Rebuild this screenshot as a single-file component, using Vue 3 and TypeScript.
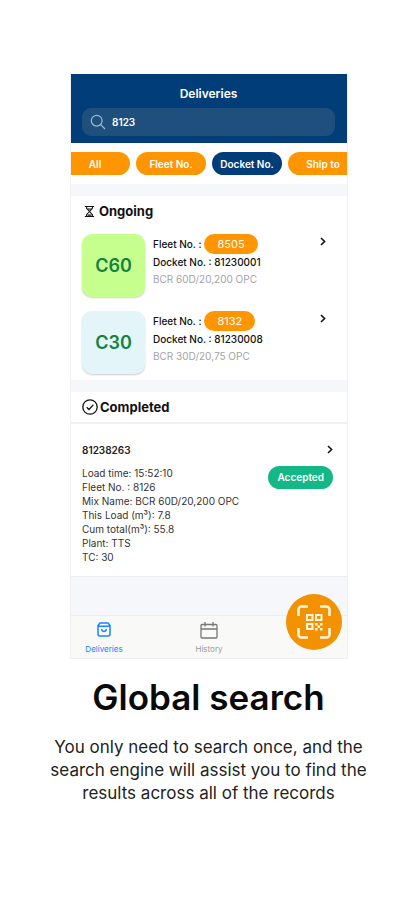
<script setup lang="ts">
import { ref } from 'vue'

interface Ongoing {
  grade: string
  tone: string
  fleet: string
  docket: string
  mix: string
}

const query = ref('8123')
const filters = ['All', 'Fleet No.', 'Docket No.', 'Ship to']
const activeFilter = ref('Docket No.')

const ongoing: Ongoing[] = [
  { grade: 'C60', tone: 'lime', fleet: '8505', docket: '81230001', mix: 'BCR 60D/20,200 OPC' },
  { grade: 'C30', tone: 'ice', fleet: '8132', docket: '81230008', mix: 'BCR 30D/20,75 OPC' },
]

const completedLines = [
  'Load time: 15:52:10',
  'Fleet No. : 8126',
  'Mix Name: BCR 60D/20,200 OPC',
  'This Load (m³): 7.8',
  'Cum total(m³): 55.8',
  'Plant: TTS',
  'TC: 30',
]
</script>

<template>
  <main class="page">
    <section class="phone">
      <header class="top">
        <h2 class="top-title">Deliveries</h2>
        <label class="search">
          <svg class="search-icon" viewBox="0 0 16 16" aria-hidden="true">
            <circle cx="6.7" cy="6.7" r="5.4" />
            <path d="M10.7 10.7 15 15" />
          </svg>
          <input v-model="query" class="search-input" type="text" aria-label="Search deliveries" />
        </label>
      </header>

      <nav class="filters">
        <button
          v-for="f in filters"
          :key="f"
          type="button"
          class="filter"
          :class="{ active: f === activeFilter }"
          @click="activeFilter = f"
        >{{ f }}</button>
      </nav>

      <section class="ongoing">
        <h3 class="heading">
          <svg class="hourglass" viewBox="0 0 12 14" aria-hidden="true">
            <path d="M1 1.5h10M1 12.5h10M2.8 1.5v2L6 7l3.2-3.5v-2M2.8 12.5v-2L6 7l3.2 3.5v2M4 4.2h4M4 11h4" />
          </svg>
          Ongoing
        </h3>
        <article v-for="o in ongoing" :key="o.docket" class="row">
          <div class="grade" :class="o.tone">{{ o.grade }}</div>
          <div class="info">
            <p class="line fleet">Fleet No. : <span class="badge">{{ o.fleet }}</span></p>
            <p class="line">Docket No. : <span class="docket">{{ o.docket }}</span></p>
            <p class="line mix">{{ o.mix }}</p>
          </div>
          <svg class="chevron" viewBox="0 0 6 9" aria-hidden="true"><path d="M1 1l3.6 3.5L1 8" /></svg>
        </article>
      </section>

      <section class="completed">
        <h3 class="heading done">
          <svg class="check" viewBox="0 0 16 16" aria-hidden="true">
            <circle cx="8" cy="8" r="7.2" />
            <path d="M4.7 8.2 7 10.5l4.4-4.6" />
          </svg>
          Completed
        </h3>
        <article class="record">
          <div class="record-top">
            <h4 class="number">81238263</h4>
            <svg class="chevron" viewBox="0 0 6 9" aria-hidden="true"><path d="M1 1l3.6 3.5L1 8" /></svg>
          </div>
          <div class="record-body">
            <ul class="details">
              <li v-for="l in completedLines" :key="l">{{ l }}</li>
            </ul>
            <span class="status">Accepted</span>
          </div>
        </article>
      </section>

      <footer class="tabs">
        <a class="tab current" href="#deliveries">
          <svg class="tab-icon bag" viewBox="0 0 14 15" aria-hidden="true">
            <path d="M3 1h8l2 2.5V12a2 2 0 0 1-2 2H3a2 2 0 0 1-2-2V3.5zM1 4.3h12M4.5 7c.3 3.2 4.700 3.2 5 0" />
          </svg>
          Deliveries
        </a>
        <a class="tab" href="#history">
          <svg class="tab-icon calendar" viewBox="0 0 18 17" aria-hidden="true">
            <rect x="1" y="2.5" width="16" height="13.5" rx="1" />
            <path d="M1 7h16M5 0v4.5M13 0v4.5" />
          </svg>
          History
        </a>
        <button class="scan" type="button" aria-label="Scan QR code">
          <svg class="scan-icon" viewBox="0 0 34 34" aria-hidden="true">
            <path class="frame" d="M1.5 11V4.5a3 3 0 0 1 3-3H11M23 1.5h6.5a3 3 0 0 1 3 3V11M32.5 23v6.5a3 3 0 0 1-3 3H23M11 32.5H4.5a3 3 0 0 1-3-3V23" />
            <path class="cells" d="M10 10h5.5v5H10zM19 10h5.500v5H19zM10 19h5.5v5H10z" />
            <path class="dots" d="M18 18h2.500v2.500H18zM23 18h2.500v2.500H23zM20.500 20.500H23V23h-2.500zM18 23h2.500v2.500H18zM23 23h2.500v2.500H23z" />
          </svg>
        </button>
      </footer>
    </section>

    <h1 class="title">Global search</h1>
    <p class="copy">You only need to search once, and the search engine will assist you to find the results across all of the records</p>
  </main>
</template>

<style>
body {
  margin: 0;
  background: #fff;
}
</style>

<style scoped>
.page {
  padding: 74px 0 96px;
  font-family: Inter, "Liberation Sans", sans-serif;
  color: #111;
}
h1, h2, h3, h4, p, ul {
  margin: 0;
  padding: 0;
}
svg {
  display: block;
  flex: none;
  fill: none;
  stroke: currentColor;
}
button {
  border: 0;
  padding: 0;
  font-family: inherit;
  cursor: pointer;
}
.phone {
  margin: 0 69px 0 70px;
  border: 1px solid #f0f0f3;
  border-top: 0;
  background: #f6f7fa;
}
.top {
  background: #003d79;
  padding: 12px 12px 7px 11px;
}
.top-title {
  font-size: 12px;
  line-height: 16px;
  font-weight: 600;
  text-align: center;
  color: #fff;
}
.search {
  display: flex;
  align-items: center;
  gap: 6px;
  height: 28px;
  margin-top: 6px;
  padding: 0 8px;
  border-radius: 9px;
  background: #1f4f7d;
}
.search-icon {
  width: 16px;
  height: 16px;
  color: #9fbbd3;
  stroke-width: 1.2;
}
.search-input {
  flex: 1;
  min-width: 0;
  border: 0;
  padding: 0;
  outline: 0;
  background: transparent;
  color: #fff;
  font: 600 10px Inter, "Liberation Sans", sans-serif;
}
.filters {
  display: flex;
  justify-content: center;
  gap: 6px;
  padding: 9px 0;
  overflow: hidden;
  background: #fff;
}
.filter {
  flex: none;
  width: 70px;
  height: 23px;
  border-radius: 12px;
  background: #ff9500;
  color: #fff;
  font-size: 10px;
  font-weight: 600;
}
.filter.active {
  background: #003d79;
}
.ongoing {
  display: flex;
  flex-direction: column;
  gap: 14px;
  margin-top: 12px;
  padding: 6px 12px 6px 11px;
  background: #fff;
}
.heading {
  display: flex;
  align-items: center;
  gap: 4px;
  height: 18px;
  font-size: 13px;
  font-weight: 700;
  color: #111;
}
.hourglass {
  width: 11px;
  height: 13px;
  margin-left: 2px;
  stroke-width: 1.2;
}
.row {
  display: flex;
  gap: 8px;
  padding-right: 9px;
}
.grade {
  display: flex;
  align-items: center;
  justify-content: center;
  flex: none;
  width: 63px;
  height: 63px;
  border-radius: 10px;
  box-shadow: 0 1px 2px rgba(0, 0, 0, 0.2);
  color: #118241;
  font-size: 18px;
  font-weight: 600;
}
.lime {
  background: #c6ff8e;
}
.ice {
  background: #e3f5f8;
}
.info {
  flex: 1;
  min-width: 0;
}
.line {
  height: 17px;
  font-size: 10px;
  line-height: 17px;
  font-weight: 500;
  white-space: nowrap;
}
.fleet {
  display: flex;
  align-items: center;
  gap: 3px;
  height: 20px;
}
.badge {
  padding: 0 13px;
  border-radius: 10px;
  background: #ff9500;
  color: #fff;
  font-size: 11px;
  line-height: 20px;
  font-weight: 400;
}
.mix {
  color: #a3a3a8;
  font-weight: 400;
  line-height: 16px;
}
.chevron {
  width: 6px;
  height: 9px;
  margin-top: 3px;
  stroke-width: 1.6;
}
.completed {
  margin-top: 12px;
  background: #fff;
}
.done {
  gap: 2px;
  height: 30px;
  padding: 0 11px;
  border-bottom: 2px solid #f1f1f4;
}
.check {
  width: 16px;
  height: 16px;
  stroke-width: 1.3;
}
.record {
  padding: 18px 14px 12px 11px;
  border-bottom: 1px solid #ececef;
}
.record-top {
  display: flex;
  justify-content: space-between;
  height: 16px;
}
.number {
  font-size: 10px;
  line-height: 16px;
  font-weight: 600;
  color: #222;
}
.record-body {
  display: flex;
  justify-content: space-between;
  align-items: flex-start;
  padding-top: 8px;
}
.details {
  list-style: none;
  font-size: 10px;
  line-height: 14px;
  white-space: nowrap;
  color: #333;
}
.status {
  padding: 0 9px;
  border-radius: 12px;
  background: #14b886;
  color: #fff;
  font-size: 10px;
  line-height: 23px;
  font-weight: 600;
}
.tabs {
  position: relative;
  display: grid;
  grid-template-columns: 66px 1fr 66px;
  height: 42px;
  margin-top: 38px;
  border-top: 1px solid #ececee;
  background: #f9f9f8;
}
.tab {
  display: flex;
  flex-direction: column;
  align-items: center;
  justify-content: space-between;
  padding: 6px 0 4px;
  color: #9a9a9a;
  font-size: 8px;
  line-height: 10px;
  text-decoration: none;
}
.tab.current {
  color: #1a83ff;
}
.bag {
  width: 14px;
  height: 15px;
  stroke-width: 1.5;
}
.calendar {
  width: 18px;
  height: 17px;
  color: #777;
  stroke-width: 1.3;
}
.scan {
  position: absolute;
  top: -22px;
  right: 5px;
  display: flex;
  align-items: center;
  justify-content: center;
  width: 56px;
  height: 56px;
  border-radius: 50%;
  background: #f29200;
  color: #fff5e0;
}
.scan-icon {
  width: 34px;
  height: 34px;
}
.frame {
  stroke-width: 2.6;
}
.cells {
  stroke-width: 2;
}
.dots {
  fill: currentColor;
  stroke: none;
}
.title {
  margin-top: 19px;
  font-size: 35px;
  line-height: 38px;
  font-weight: 600;
  text-align: center;
  color: #0a0a0a;
}
.copy {
  margin-top: 20px;
  padding: 0 44px;
  font-size: 17px;
  line-height: 23px;
  text-align: center;
  color: #222;
}
</style>
